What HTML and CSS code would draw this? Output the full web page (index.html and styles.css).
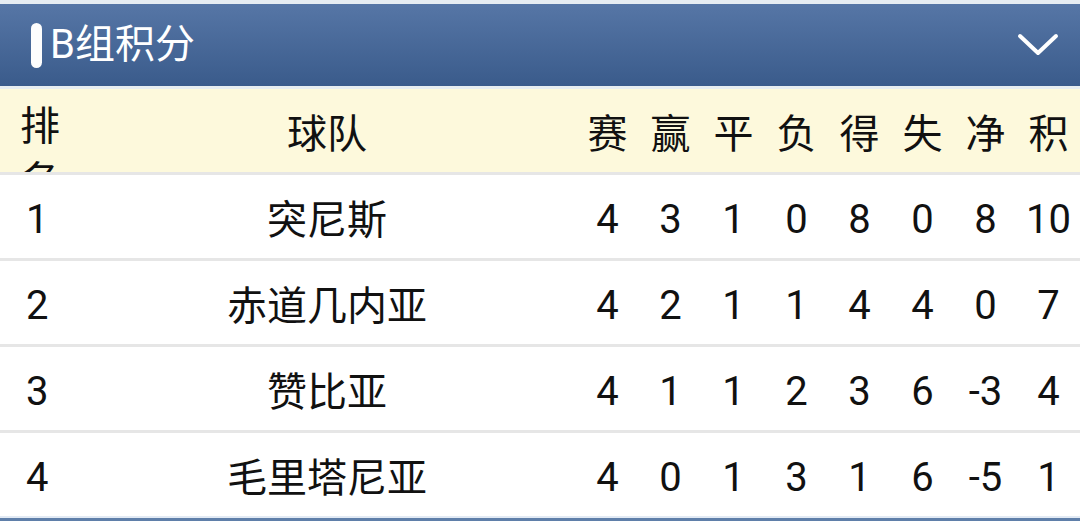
FILE: index.html
```html
<!DOCTYPE html>
<html lang="zh">
<head>
<meta charset="utf-8">
<link rel="stylesheet" href="styles.css">
</head>
<body>
<div class="panel">
  <div class="titlebar">
    <span class="pill"></span>
    <span class="title">B组积分</span>
    <svg class="chev" width="42" height="26" viewBox="0 0 42 26"><path d="M3 4 L21 21 L39 4" fill="none" stroke="#fff" stroke-width="4" stroke-linecap="round" stroke-linejoin="round"/></svg>
  </div>
  <div class="row head">
    <div class="rank">排名</div>
    <div class="team">球队</div>
    <div class="stat">赛</div><div class="stat">赢</div><div class="stat">平</div><div class="stat">负</div>
    <div class="stat">得</div><div class="stat">失</div><div class="stat">净</div><div class="stat">积</div>
  </div>
  <div class="row">
    <div class="rank num">1</div><div class="team">突尼斯</div>
    <div class="stat num">4</div><div class="stat num">3</div><div class="stat num">1</div><div class="stat num">0</div>
    <div class="stat num">8</div><div class="stat num">0</div><div class="stat num">8</div><div class="stat num">10</div>
  </div>
  <div class="row">
    <div class="rank num">2</div><div class="team">赤道几内亚</div>
    <div class="stat num">4</div><div class="stat num">2</div><div class="stat num">1</div><div class="stat num">1</div>
    <div class="stat num">4</div><div class="stat num">4</div><div class="stat num">0</div><div class="stat num">7</div>
  </div>
  <div class="row">
    <div class="rank num">3</div><div class="team">赞比亚</div>
    <div class="stat num">4</div><div class="stat num">1</div><div class="stat num">1</div><div class="stat num">2</div>
    <div class="stat num">3</div><div class="stat num">6</div><div class="stat num">-3</div><div class="stat num">4</div>
  </div>
  <div class="row last">
    <div class="rank num">4</div><div class="team">毛里塔尼亚</div>
    <div class="stat num">4</div><div class="stat num">0</div><div class="stat num">1</div><div class="stat num">3</div>
    <div class="stat num">1</div><div class="stat num">6</div><div class="stat num">-5</div><div class="stat num">1</div>
  </div>
</div>
</body>
</html>
```

FILE: styles.css
```css
* { box-sizing: border-box; }
html, body { margin: 0; padding: 0; background: #ffffff; }
body {
  font-family: Roboto, "Noto Sans CJK SC", sans-serif;
  color: #111;
  width: 1080px;
  height: 521px;
  overflow: hidden;
}
.panel {
  border-top: 4px solid #e6ecf2;
  border-bottom: 3px solid #5f7fa9;
}
.titlebar {
  height: 82px;
  display: flex;
  align-items: center;
  padding-left: 31px;
  padding-right: 21px;
  background: linear-gradient(#5676a6, #3a5b8b);
  border-bottom: 3px solid #e7edf0;
  box-sizing: content-box;
}
.pill {
  width: 11px;
  height: 45px;
  border-radius: 6px;
  background: #fdfdfd;
  margin-right: 8px;
}
.title {
  color: #fff;
  font-size: 40px;
  line-height: 1;
  flex: 1;
}
.chev { display: block; }
.row {
  display: grid;
  grid-template-columns: 78px 498px repeat(8, 63px);
  height: 86px;
  border-bottom: 3px solid #e6e6e6;
  background: #fff;
  font-size: 40px;
}
.row.last { border-bottom: 2px solid #e2eaf4; height: 85px; }
.row.head {
  background: #fdf9dc;
  overflow: hidden;
}
.row > div {
  display: flex;
  align-items: center;
  justify-content: center;
  white-space: nowrap;
}
.row > .num {
  padding-top: 5px;
}
.row > .rank {
  justify-content: flex-start;
  padding-left: 26px;
}
.row.head > .rank {
  display: block;
  white-space: normal;
  word-break: break-all;
  line-height: 55px;
  padding-top: 10px;
  padding-left: 20px;
  overflow: hidden;
  height: 83px;
}
```
